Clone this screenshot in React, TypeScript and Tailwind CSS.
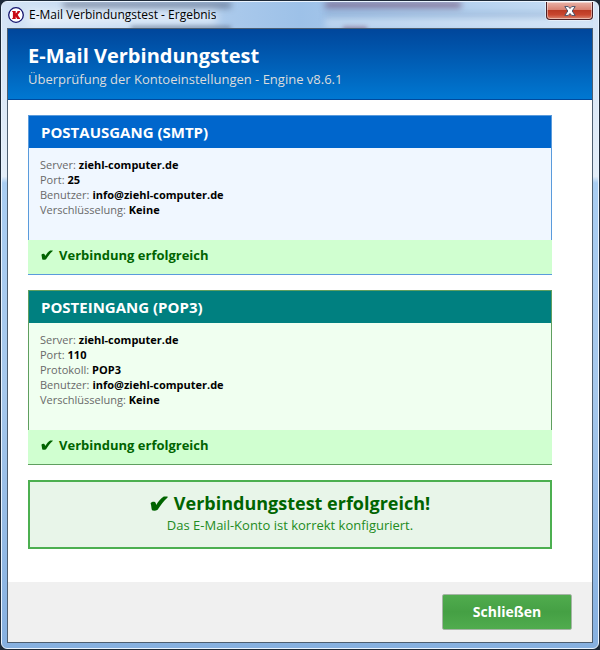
import clsx from "clsx";

type Row = { label: string; value: string };

const smtpRows: Row[] = [
  { label: "Server", value: "ziehl-computer.de" },
  { label: "Port", value: "25" },
  { label: "Benutzer", value: "info@ziehl-computer.de" },
  { label: "Verschlüsselung", value: "Keine" },
];

const popRows: Row[] = [
  { label: "Server", value: "ziehl-computer.de" },
  { label: "Port", value: "110" },
  { label: "Protokoll", value: "POP3" },
  { label: "Benutzer", value: "info@ziehl-computer.de" },
  { label: "Verschlüsselung", value: "Keine" },
];

function CheckIcon({ className }: { className?: string }) {
  return (
    <svg viewBox="0 0 18 15" className={clsx("shrink-0 fill-[#006400]", className)} aria-hidden="true">
      <path d="M0.6 7.2C1.4 5.8 3.6 5.3 4.9 6.1C5.7 6.7 6 7.900 6.200 9C8.400 5.400 11 2.400 13.800 0.600H17.600V1.600C13.600 5.200 10.600 9.400 7.600 13.800C6 15 3.200 15 2 14.300C1.300 12.200 1.400 9.400 0.600 7.200Z" />
    </svg>
  );
}

function AppIcon() {
  return (
    <svg viewBox="0 0 16 16" className="w-4 h-4 shrink-0" aria-hidden="true">
      <circle cx="8" cy="8" r="7.3" fill="#fff" stroke="#14146e" strokeWidth="1.3" />
      <path d="M4.2 3.900H7.700V6.600L9.300 4.900V3.900H12V5.100L9.700 7.700L11.500 10.800H12V12.100H9.200L7.700 9.500V12.100H4.200V10.900H4.900V5.100H4.200Z" fill="#c80a14" />
    </svg>
  );
}

function CloseIcon() {
  return (
    <svg viewBox="0 0 12 10" className="w-3 h-[10px]" aria-hidden="true">
      <path
        d="M0.800 0.600H4.300L6 2.500L7.700 0.600H11.200L8.200 5L11.200 9.400H7.700L6 7.500L4.300 9.400H0.800L3.800 5Z"
        fill="#fff"
        stroke="#4d5268"
        strokeWidth="1"
      />
    </svg>
  );
}

function TitleBar() {
  return (
    <div className="relative h-[26px] flex items-center pl-px">
      <div
        className="absolute inset-0 overflow-hidden pointer-events-none bg-gradient-to-r from-[#d3e3f5] via-[#9dc1e8] to-[#c9dff5]"
        aria-hidden="true"
      >
        <div className="absolute left-14 top-0 w-[168px] h-1.5 bg-[#47526a]/60 blur-[3px]" />
        <div className="absolute left-5 top-2 w-[190px] h-4 bg-white/50 blur-[5px]" />
        <div className="absolute left-[124px] top-6 w-[100px] h-1 bg-[#47526a]/50 blur-[2px]" />
        <div className="absolute left-[318px] top-0 w-[136px] h-1.5 bg-[#6d4a70]/70 blur-[3px]" />
        <div className="absolute left-[318px] right-0 top-2.5 h-1.5 bg-[#7f9ec2]/40 blur-[3px]" />
        <div className="absolute left-[336px] top-6 w-6 h-1.5 bg-[#6d4a70]/60 blur-[2px]" />
        <div className="absolute left-[318px] right-0 top-4 h-2.5 bg-white/30 blur-[3px]" />
      </div>
      <div className="relative flex items-center gap-[5px] min-w-0">
        <AppIcon />
        <span className="text-[12px] leading-4 text-black truncate">E-Mail Verbindungstest - Ergebnis</span>
      </div>
      <button
        type="button"
        aria-label="Fenster schließen"
        className="absolute right-0 top-0 w-[47px] h-[18px] flex items-center justify-center rounded-b-[4px] border border-t-0 border-[#4b1f25] bg-[linear-gradient(#e9b3a8,#d98272_45%,#bb3a24_50%,#c8462f_75%,#dc8670)] shadow-[inset_0_0_0_1px_rgba(255,255,255,0.45),0_0_0_1px_rgba(255,255,255,0.5)]"
      >
        <CloseIcon />
      </button>
    </div>
  );
}

type PanelProps = {
  title: string;
  rows: Row[];
  tone: "blue" | "green";
};

function ResultPanel({ title, rows, tone }: PanelProps) {
  const blue = tone === "blue";

  return (
    <section className={clsx("border-t border-b", blue ? "border-[#5a9bdc]" : "border-[#5f9f5f]")}>
      <div className={clsx("border-x", blue ? "border-[#5a9bdc] bg-[#f0f7ff]" : "border-[#5f9f5f] bg-[#f0fff0]")}>
        <h2
          className={clsx(
            "h-8 px-3 flex items-center text-[15px] leading-5 font-bold text-white",
            blue ? "bg-[#0066cc]" : "bg-[#008080]"
          )}
        >
          {title}
        </h2>
        <dl className="px-[11px] pt-[9px] pb-[23px] text-[11px] leading-[15px]">
          {rows.map((row) => (
            <div key={row.label} className="flex gap-[3px]">
              <dt className="text-[#696969]">{row.label}:</dt>
              <dd className="font-bold text-black">{row.value}</dd>
            </div>
          ))}
        </dl>
      </div>
      <p className="h-[34px] px-[13px] pb-1 flex items-center gap-[6px] bg-[#d0ffd0] text-[13px] leading-5 font-bold text-[#006400]">
        <CheckIcon className="w-3 h-[10px]" />
        Verbindung erfolgreich
      </p>
    </section>
  );
}

export default function App() {
  return (
    <div className="min-h-screen flex flex-col bg-[#1e2a38] font-['Open_Sans','Noto_Sans',sans-serif]">
      <div className="flex-1 flex flex-col m-px px-[5px] pb-[5px] rounded-[6px] border border-[#eaf4ff] bg-[linear-gradient(#d3e3f5,#e3edf8_27%,#a9cdf2_28%,#a6c8ec_60%,#86b0e0)]">
        <TitleBar />
        <div className="flex-1 flex flex-col border border-[#4d5e70] bg-white">
          <header className="h-[71px] px-5 pt-[13px] border-b border-[#004a9e] bg-gradient-to-b from-[#00469b] to-[#0078d2]">
            <h1 className="text-[20px] leading-7 font-bold text-white">E-Mail Verbindungstest</h1>
            <p className="text-[13px] leading-[18px] text-[#dcdcdc]">
              Überprüfung der Kontoeinstellungen - Engine v8.6.1
            </p>
          </header>

          <main className="flex-1 flex flex-col gap-[15px] pl-5 pr-10 py-[15px]">
            <ResultPanel title="POSTAUSGANG (SMTP)" rows={smtpRows} tone="blue" />
            <ResultPanel title="POSTEINGANG (POP3)" rows={popRows} tone="green" />

            <section className="h-[69px] pt-[9px] text-center border-2 border-[#4caf50] bg-[#e8f5e9]">
              <p className="flex items-center justify-center gap-[6px] text-[18px] leading-[25px] font-bold text-[#006400]">
                <CheckIcon className="w-[18px] h-[15px]" />
                Verbindungstest erfolgreich!
              </p>
              <p className="text-[13px] leading-[18px] text-[#228b22]">Das E-Mail-Konto ist korrekt konfiguriert.</p>
            </section>
          </main>

          <footer className="h-[60px] px-5 flex items-center justify-end bg-[#f0f0f0]">
            <button
              type="button"
              className="w-[130px] h-9 rounded-[2px] border border-[#a5b5a5] bg-[linear-gradient(#50ac4e,#45a044_50%,#50ac4e)] text-[14px] leading-5 font-bold text-white"
            >
              Schließen
            </button>
          </footer>
        </div>
      </div>
    </div>
  );
}
